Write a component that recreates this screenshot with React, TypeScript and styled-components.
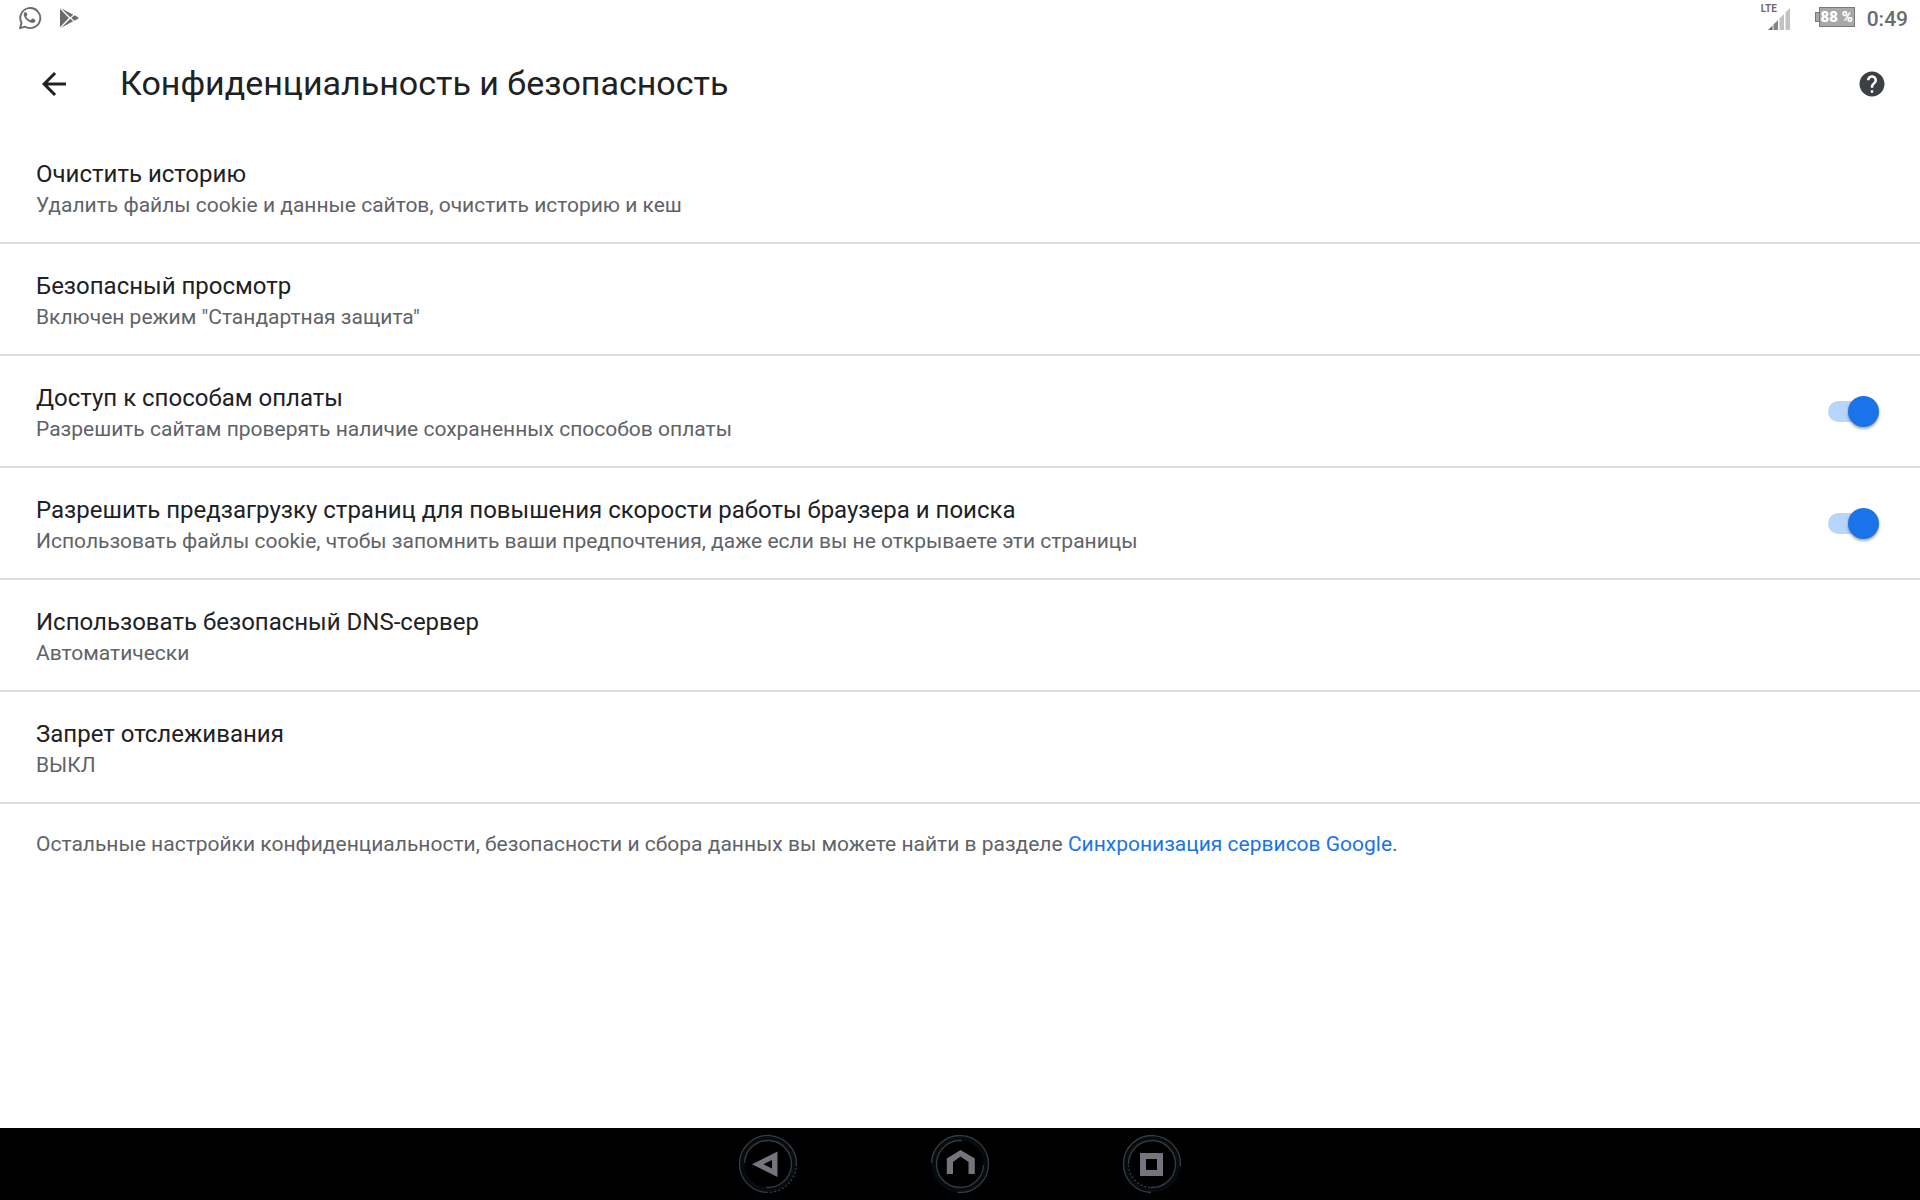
import React, { useState } from "react";
import styled, { createGlobalStyle } from "styled-components";

const GlobalStyle = createGlobalStyle`
  * { box-sizing: border-box; }
  body {
    margin: 0;
    background: #fff;
    color: #202124;
    font-family: Roboto, "Noto Sans", sans-serif;
  }
`;

const Screen = styled.div`
  display: flex;
  flex-direction: column;
  min-height: 100vh;
`;

const StatusBar = styled.div`
  display: flex;
  align-items: center;
  justify-content: space-between;
  height: 36px;
  padding: 0 12px 0 18px;
  color: #6b6b6b;
`;

const StatusGroup = styled.div<{ $gap: number }>`
  display: flex;
  align-items: center;
  gap: ${(p) => p.$gap}px;
`;

const Signal = styled.div`
  position: relative;
  display: flex;
  align-items: flex-end;
  width: 29px;
  height: 26px;
  justify-content: flex-end;
  margin-bottom: 2px;
`;

const Network = styled.span`
  position: absolute;
  left: 0;
  top: 0;
  font-size: 10px;
  line-height: 10px;
  font-weight: 700;
`;

const Battery = styled.div`
  display: flex;
  align-items: center;
  margin: 0 12px 2px 25px;
`;

const BatteryTip = styled.span`
  width: 4px;
  height: 10px;
  background: #a9a9a9;
  border: 1px solid #7a7a7a;
  border-right: 0;
`;

const BatteryCell = styled.span`
  width: 36px;
  height: 20px;
  background: #a9a9a9;
  border: 1px solid #7a7a7a;
  color: #fff;
  font-size: 15px;
  line-height: 18px;
  font-weight: 900;
  display: flex;
  justify-content: center;
  white-space: nowrap;
`;

const Clock = styled.span`
  font-size: 21px;
  line-height: 36px;
  padding-top: 2px;
  font-weight: 500;
`;

const Toolbar = styled.header`
  display: flex;
  align-items: center;
  height: 96px;
  padding: 0 30px 0 36px;
`;

const Title = styled.h1`
  flex: 1;
  margin: 0 0 0 48px;
  padding-bottom: 2px;
  font-size: 34px;
  line-height: 40px;
  font-weight: 400;
`;

const IconButton = styled.button`
  display: flex;
  padding: 0;
  border: 0;
  background: none;
  color: inherit;
  cursor: pointer;
`;

const Settings = styled.main`
  flex: 1;
`;

const Row = styled.label`
  display: flex;
  align-items: center;
  justify-content: space-between;
  padding: 24px 41px 24px 36px;
  border-bottom: 2px solid #dedede;
`;

const RowText = styled.span`
  display: flex;
  flex-direction: column;
`;

const RowTitle = styled.span`
  font-size: 24px;
  line-height: 36px;
`;

const RowSummary = styled.span`
  font-size: 21px;
  line-height: 26px;
  color: #5f6368;
`;

const RowButton = styled.button`
  display: flex;
  width: 100%;
  padding: 24px 41px 24px 36px;
  border: 0;
  border-bottom: 2px solid #dedede;
  background: none;
  color: inherit;
  font: inherit;
  text-align: left;
  cursor: pointer;
`;

const Switch = styled.input`
  appearance: none;
  display: flex;
  align-items: center;
  justify-content: flex-start;
  width: 51px;
  height: 21px;
  margin: 0;
  border-radius: 11px;
  background: #c4c6c8;
  cursor: pointer;

  &::before {
    content: "";
    width: 31px;
    height: 31px;
    flex: none;
    border-radius: 50%;
    background: #fff;
    box-shadow: 0 2px 3px rgba(0, 0, 0, 0.35);
  }

  &:checked {
    justify-content: flex-end;
    background: #bad5fa;
  }

  &:checked::before {
    background: #1a73e8;
  }
`;

const Note = styled.p`
  margin: 0;
  padding: 26px 36px;
  font-size: 21px;
  line-height: 28px;
  color: #5f6368;
`;

const Link = styled.a`
  color: #1a73e8;
  text-decoration: none;
`;

const NavBar = styled.nav`
  display: flex;
  align-items: center;
  justify-content: center;
  gap: 132px;
  height: 72px;
  background: #000;
`;

const WhatsAppIcon = () => (
  <svg width="24" height="24" viewBox="0 0 24 24" aria-hidden="true">
    <path
      d="M2 22.2 3.5 16.8A10 10 0 1 1 7.300 20.700Z"
      fill="none"
      stroke="currentColor"
      strokeWidth="1.900"
      strokeLinejoin="round"
    />
    <path
      d="M8.500 6.500c-.3-.6-.6-.6-.9-.6-.9 0-1.900 1-1.900 2.700 0 1.600 1 3.100 2.300 4.600 1.600 1.800 3.500 3.100 5.900 3.700 1.500.3 3-.6 3.300-1.700.2-.7.200-1.200 0-1.400l-2.500-1.200c-.4-.2-.6 0-.8.2l-1 1.200c-.2.2-.4.300-.8.100-1.600-.7-2.900-1.900-3.700-3.400-.2-.3 0-.5.200-.7l.7-.9c.1-.2.100-.4 0-.6Z"
      fill="currentColor"
    />
  </svg>
);

const PlayIcon = () => (
  <svg width="20" height="20" viewBox="0 0 20 20" fill="currentColor" aria-hidden="true">
    <path d="M0 .8v18.400L8.800 10Z" />
    <path d="M1.200.2 13.200 6.800 10.300 9.200Z" />
    <path d="M1.200 19.800 13.200 13.200 10.300 10.800Z" />
    <path d="M11.300 10 14.500 7.300 18 9.200Q19.400 10 18 10.800L14.500 12.700Z" />
  </svg>
);

const SignalIcon = () => (
  <svg width="22" height="22" viewBox="0 0 22 22" aria-hidden="true">
    <path d="M0 22 4.500 17.500V22Z" fill="#6b6b6b" />
    <path d="M5.500 16.500 10 12V22H5.500Z" fill="#858585" />
    <path d="M11.500 10.500 16 6V22H11.500Z" fill="#c2c2c2" />
    <path d="M17.500 4.500 22 0V22H17.500Z" fill="#c2c2c2" />
  </svg>
);

const BackArrow = () => (
  <svg width="36" height="36" viewBox="0 0 24 24" fill="currentColor" aria-hidden="true">
    <path d="M20 11H7.830l5.590-5.590L12 4l-8 8 8 8 1.410-1.410L7.830 13H20v-2z" />
  </svg>
);

const HelpIcon = () => (
  <svg width="36" height="30" viewBox="0 0 28.800 24" fill="#3c4043" aria-hidden="true">
    <path
      transform="translate(2.400 0)"
      d="M12 2C6.480 2 2 6.480 2 12s4.480 10 10 10 10-4.480 10-10S17.520 2 12 2zm1 17h-2v-2h2v2zm2.070-7.750l-.9.920C13.450 12.900 13 13.500 13 15h-2v-.5c0-1.100.450-2.100 1.170-2.830l1.240-1.260c.370-.360.590-.860.590-1.410 0-1.100-.9-2-2-2s-2 .9-2 2H8c0-2.210 1.790-4 4-4s4 1.790 4 4c0 .880-.360 1.680-.930 2.250z"
    />
  </svg>
);

const ring = { fill: "none", stroke: "#343c42", strokeWidth: 1.3 };
const glow = { fill: "none", stroke: "#070b0d", strokeWidth: 5 };

const NavBack = () => (
  <svg width="60" height="60" viewBox="0 0 60 60" aria-hidden="true">
    <circle cx="30" cy="30" r="26" {...glow} />
    <path d="M28 58.400A28.500 28.500 0 1 1 58.400 32" {...ring} />
    <path d="M58.200 34A28.500 28.500 0 0 1 28 58.400" strokeDasharray="2 2" {...ring} />
    <path d="M6.500 29A23.500 23.500 0 1 1 28 53.400" {...ring} />
    <path d="M39.500 17.500V43L14 30.200ZM34 26v8.500L25.500 30.200Z" fill="#75747d" fillRule="evenodd" />
  </svg>
);

const NavHome = () => (
  <svg width="60" height="60" viewBox="0 0 60 60" aria-hidden="true">
    <circle cx="30" cy="30" r="26" {...glow} />
    <path d="M1.500 29A28.500 28.500 0 1 1 27.500 58.400" {...ring} />
    <path d="M32 6.600A23.500 23.500 0 1 0 53.500 31" {...ring} />
    <path d="M16.800 40V24.500L30.500 16 44.800 24.500V40H38.500V28L30.500 22.500 23 28V40Z" fill="#75747d" />
  </svg>
);

const NavRecent = () => (
  <svg width="60" height="60" viewBox="0 0 60 60" aria-hidden="true">
    <circle cx="30" cy="30" r="26" {...glow} />
    <path d="M58.400 32A28.500 28.500 0 1 0 29 58.500" {...ring} />
    <path d="M6.500 30A23.500 23.500 0 1 1 29 53.500" {...ring} />
    <path d="M6.500 31A23.500 23.500 0 0 0 29 53.500" strokeDasharray="2 2" {...ring} />
    <path d="M18 19H41V42H18ZM24 25V36H35V25Z" fill="#75747d" fillRule="evenodd" />
  </svg>
);

type TextProps = { title: string; summary: string };

const Texts = ({ title, summary }: TextProps) => (
  <RowText>
    <RowTitle>{title}</RowTitle>
    <RowSummary>{summary}</RowSummary>
  </RowText>
);

const LinkRow = (props: TextProps) => (
  <RowButton type="button">
    <Texts {...props} />
  </RowButton>
);

const SwitchRow = (props: TextProps) => {
  const [on, setOn] = useState(true);
  return (
    <Row>
      <Texts {...props} />
      <Switch type="checkbox" checked={on} onChange={() => setOn(!on)} />
    </Row>
  );
};

export default function App() {
  return (
    <Screen>
      <GlobalStyle />
      <StatusBar>
        <StatusGroup $gap={18}>
          <WhatsAppIcon />
          <PlayIcon />
        </StatusGroup>
        <StatusGroup $gap={0}>
          <Signal>
            <Network>LTE</Network>
            <SignalIcon />
          </Signal>
          <Battery>
            <BatteryTip />
            <BatteryCell>88 %</BatteryCell>
          </Battery>
          <Clock>0:49</Clock>
        </StatusGroup>
      </StatusBar>
      <Toolbar>
        <IconButton type="button" aria-label="Назад">
          <BackArrow />
        </IconButton>
        <Title>Конфиденциальность и безопасность</Title>
        <IconButton type="button" aria-label="Справка">
          <HelpIcon />
        </IconButton>
      </Toolbar>
      <Settings>
        <LinkRow
          title="Очистить историю"
          summary="Удалить файлы cookie и данные сайтов, очистить историю и кеш"
        />
        <LinkRow title="Безопасный просмотр" summary={'Включен режим "Стандартная защита"'} />
        <SwitchRow
          title="Доступ к способам оплаты"
          summary="Разрешить сайтам проверять наличие сохраненных способов оплаты"
        />
        <SwitchRow
          title="Разрешить предзагрузку страниц для повышения скорости работы браузера и поиска"
          summary="Использовать файлы cookie, чтобы запомнить ваши предпочтения, даже если вы не открываете эти страницы"
        />
        <LinkRow title="Использовать безопасный DNS-сервер" summary="Автоматически" />
        <LinkRow title="Запрет отслеживания" summary="ВЫКЛ" />
        <Note>
          Остальные настройки конфиденциальности, безопасности и сбора данных вы можете найти в разделе{" "}
          <Link href="#sync">Синхронизация сервисов Google</Link>.
        </Note>
      </Settings>
      <NavBar>
        <IconButton type="button" aria-label="Назад">
          <NavBack />
        </IconButton>
        <IconButton type="button" aria-label="Главный экран">
          <NavHome />
        </IconButton>
        <IconButton type="button" aria-label="Недавние приложения">
          <NavRecent />
        </IconButton>
      </NavBar>
    </Screen>
  );
}
